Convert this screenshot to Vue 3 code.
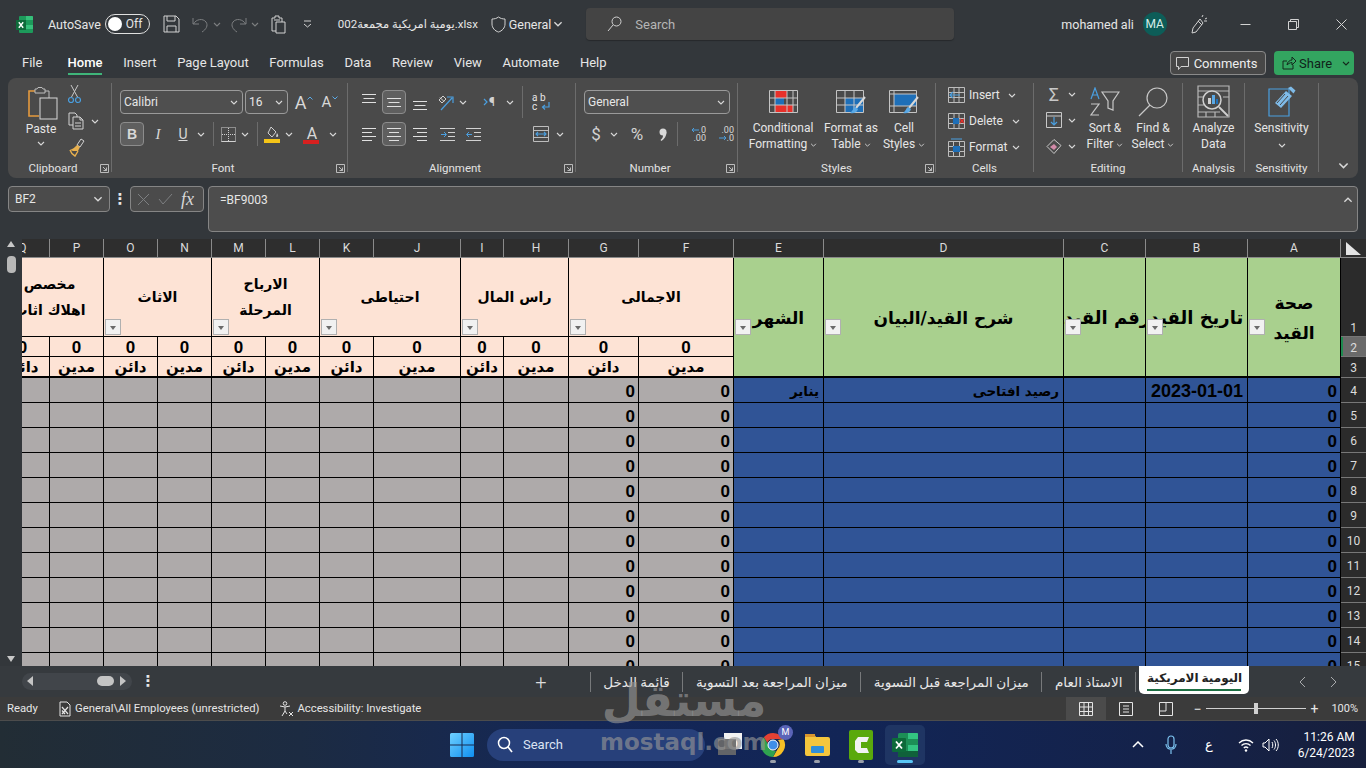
<template>
<div class="app">
  <!-- icon sprite -->
  <svg class="sprite" aria-hidden="true">
    <symbol id="chev" viewBox="0 0 8 5"><path d="M1 1l3 3 3-3" fill="none" stroke-width="1.100"/></symbol>
    <symbol id="launch" viewBox="0 0 9 9"><path d="M.5.500h8v8h-8zM3 3l3.500 3.500M6.500 3.500v3h-3" fill="none" stroke-width=".9"/></symbol>
    <symbol id="three" viewBox="0 0 14 9"><path d="M0 .500h14M1.500 4.500h11M0 8.500h14" fill="none"/></symbol>
    <symbol id="a-left" viewBox="0 0 14 13"><path d="M0 .500h14M0 4.500h10M0 8.500h14M0 12.500h10" fill="none"/></symbol>
    <symbol id="a-center" viewBox="0 0 14 13"><path d="M0 .500h14M2 4.500h10M0 8.500h14M2 12.500h10" fill="none"/></symbol>
    <symbol id="a-right" viewBox="0 0 14 13"><path d="M0 .500h14M4 4.500h10M0 8.500h14M4 12.500h10" fill="none"/></symbol>
  </svg>

  <!-- title bar -->
  <header class="titlebar">
    <svg class="xl-mini" width="17" height="17" viewBox="0 0 17 17">
      <rect x="3" y="0" width="14" height="17" rx="1" fill="#1d9a5b"/>
      <path d="M10 0h6a1 1 0 0 1 1 1v3h-7zM10 9h7v4h-7z" fill="#36c07a"/>
      <rect x="0" y="4" width="10" height="10" fill="#0e6a3a"/>
      <path d="M2.800 6.200l4.400 5.600M7.200 6.200l-4.400 5.600" stroke="#fff" stroke-width="1.400"/>
    </svg>
    <span class="autosave">AutoSave</span>
    <span class="toggle"><i></i>Off</span>
    <svg class="ic save" width="17" height="18" viewBox="0 0 17 18"><path d="M1 1h12l3 3v13H1zM4 1v5h8V1M4 17v-6h9v6"/></svg>
    <svg class="ic dim undo" width="17" height="17" viewBox="0 0 17 17"><path d="M1 2v6h6M1.500 8C4 3 11 2 14 6c2.500 3.500 0 7.500-4 10"/></svg>
    <svg class="chv dim q1"><use href="#chev"/></svg>
    <svg class="ic dim redo" width="17" height="17" viewBox="0 0 17 17"><path d="M16 2v6h-6M15.500 8C13 3 6 2 3 6c-2.500 3.500 0 7.500 4 10"/></svg>
    <svg class="chv dim q2"><use href="#chev"/></svg>
    <svg class="ic clipb" width="15" height="19" viewBox="0 0 15 19"><path d="M1 3h3V1h4v2h3v4M1 3v13h4M5 7h9v11H5zM3 5h6"/></svg>
    <svg class="ic qat" width="9" height="8" viewBox="0 0 9 8"><path d="M1 1h7M1 4l3.500 3L8 4"/></svg>
    <span class="filename">يومية امريكية مجمعة002.xlsx</span>
    <svg class="ic shield" width="15" height="17" viewBox="0 0 15 17"><path d="M7.500 1c2 1.500 4 2 6.500 2v5c0 4-3 7-6.500 8C4 15 1 12 1 8V3c2.500 0 4.500-.5 6.500-2z"/></svg>
    <span class="general">General</span>
    <svg class="chv-lg"><use href="#chev"/></svg>
    <div class="searchbox">
      <svg class="ic" width="15" height="16" viewBox="0 0 15 16"><circle cx="9.500" cy="5.500" r="4.500"/><path d="M6 9l-5 6"/></svg>
      <span>Search</span>
    </div>
    <span class="username">mohamed ali</span>
    <span class="avatar">MA</span>
    <svg class="ic pen" width="17" height="20" viewBox="0 0 17 20"><path d="M9 5L2 14l-1 5 4-1 7-9zM7 7l4 4M11 3l1-2M14 5l2-1M13 7h3"/></svg>
    <div class="winbtns">
      <svg class="ic" width="11" height="11" viewBox="0 0 11 11"><path d="M.5 5.500h10"/></svg>
      <svg class="ic" width="11" height="11" viewBox="0 0 11 11"><path d="M.5 2.500h8v8h-8zM2.500 2.500v-2h8v8h-2"/></svg>
      <svg class="ic" width="11" height="11" viewBox="0 0 11 11"><path d="M.5.500l10 10M10.500.500l-10 10"/></svg>
    </div>
  </header>

  <!-- menu tabs -->
  <nav class="menubar">
    <a v-for="t in tabs" :key="t" :class="{ on: t === 'Home', first: t === 'File' }">{{ t }}</a>
    <button class="comments">
      <svg class="ic" width="13" height="13" viewBox="0 0 13 13"><path d="M.5.500h12v9H5l-2.500 3v-3h-2z"/></svg>
      Comments
    </button>
    <div class="share">
      <svg class="ic dark" width="14" height="14" viewBox="0 0 14 14"><path d="M1 5h4M1 5v8h10V9M5 9c0-3 3-5 5-5V1l4 4-4 4V6.500C8 6.500 6 8 5 9z"/></svg>
      <span>Share</span>
      <svg class="chv dark sh"><use href="#chev"/></svg>
    </div>
  </nav>

  <!-- ribbon -->
  <section class="ribbon">
    <div class="group g-clip">
      <div class="body">
        <div class="paste">
          <svg width="32" height="33" viewBox="0 0 32 33" fill="none">
            <path d="M8 4H2v25h10" stroke="#e59a3e" stroke-width="1.600"/>
            <path d="M8 4V2h2l1-1.500h4L16 2h2v4H8zM18 4h4v7" stroke="#bdbdbd"/>
            <rect x="13" y="11" width="17" height="21" stroke="#d8d8d8" fill="#4a4a4a"/>
          </svg>
          <span class="lbl">Paste</span>
          <svg class="chv"><use href="#chev"/></svg>
        </div>
        <div class="clip-tools">
          <svg width="13" height="20" viewBox="0 0 13 20" fill="none"><path d="M3 1l6.500 12M10 1L3.500 13" stroke="#c8c8c8"/><circle cx="3" cy="16" r="2.500" stroke="#4a9fe0" stroke-width="1.200"/><circle cx="10" cy="16" r="2.500" stroke="#4a9fe0" stroke-width="1.200"/></svg>
          <div class="row">
            <svg class="ic" width="16" height="18" viewBox="0 0 16 18"><path d="M1 1h6l2 2v2M1 1v12h4M5 5h7l3 3v9H5zM12 5v3h3M7 11h6M7 14h6"/></svg>
            <svg class="chv ml5"><use href="#chev"/></svg>
          </div>
          <svg width="17" height="20" viewBox="0 0 17 20" fill="none"><path d="M13 1l3 2-4 6-3-2z" stroke="#d0d0d0"/><path d="M9 7l3 2-2 4H5l-3-1c3-1 5-3 7-5z" fill="#e8b04e"/><path d="M2 12c1 3 3 5 5 6l3-5" stroke="#e8b04e" stroke-width="1.400"/></svg>
        </div>
      </div>
      <div class="glabel pad">Clipboard<svg class="launch"><use href="#launch"/></svg></div>
    </div>

    <div class="group g-font">
      <div class="body two">
        <div class="row">
          <div class="select fam">Calibri<svg class="chv end"><use href="#chev"/></svg></div>
          <div class="select size">16<svg class="chv end"><use href="#chev"/></svg></div>
          <span class="tb w26 ml6 bigA">A<svg class="caret" width="6" height="4" viewBox="0 0 6 4"><path d="M.5 3.500L3 1l2.500 2.500" fill="none" stroke="#5aa9e6"/></svg></span>
          <span class="tb w26 midA">A<svg class="caret" width="6" height="4" viewBox="0 0 6 4"><path d="M.5.500L3 3 5.500.500" fill="none" stroke="#5aa9e6"/></svg></span>
        </div>
        <div class="row">
          <span class="tb w24 pressed b">B</span>
          <span class="tb w28 i">I</span>
          <span class="tb w22 u">U</span>
          <span class="tb w14"><svg class="chv"><use href="#chev"/></svg></span>
          <i class="vsep"></i>
          <span class="tb w20"><svg class="ic" width="15" height="15" viewBox="0 0 15 15"><path d="M.5.500h14v14H.5z" stroke-dasharray="1 1"/><path d="M7.500 1v13M1 7.500h13" stroke-dasharray="1 1"/><path d="M.5 14.500h14"/></svg></span>
          <span class="tb w14"><svg class="chv"><use href="#chev"/></svg></span>
          <i class="vsep"></i>
          <span class="tb w20"><svg width="16" height="17" viewBox="0 0 16 17" fill="none"><path d="M7 1l5 5-4 5-4-4z" stroke="#d0d0d0"/><path d="M13 7c1 1.500 1.500 2.500 1 3.500-.5.500-1.500.500-2 0" fill="#d0d0d0"/><rect x="0" y="13" width="16" height="4" fill="#f5c518"/></svg></span>
          <span class="tb w14"><svg class="chv"><use href="#chev"/></svg></span>
          <span class="tb w32 fontcolor">A</span>
          <span class="tb w10"><svg class="chv"><use href="#chev"/></svg></span>
        </div>
      </div>
      <div class="glabel pad">Font<svg class="launch"><use href="#launch"/></svg></div>
    </div>

    <div class="group g-align">
      <div class="body two">
        <div class="row">
          <span class="tb w26"><svg class="ln3 up3"><use href="#three"/></svg></span>
          <span class="tb w24 pressed"><svg class="ln3"><use href="#three"/></svg></span>
          <span class="tb w28"><svg class="ln3 dn3"><use href="#three"/></svg></span>
          <span class="tb w22"><svg width="18" height="17" viewBox="0 0 18 17" fill="none"><path d="M3 6l4-4 3 3-4 4zM4 3.500l4 4" stroke="#d0d0d0"/><path d="M5 16L16 4M11 3h6v6" stroke="#4a9fe0" stroke-width="1.200"/></svg></span>
          <span class="tb w14"><svg class="chv"><use href="#chev"/></svg></span>
          <span class="tb w28 pil ml5b"><svg width="5" height="8" viewBox="0 0 5 8" fill="none"><path d="M1 1l3 3-3 3" stroke="#4a9fe0" stroke-width="1.200"/></svg>¶</span>
          <span class="tb w14"><svg class="chv"><use href="#chev"/></svg></span>
          <i class="vsep tall"></i>
          <span class="tb w20 wrap"><span>a b<br>c</span><svg class="wrap-arrow" width="9" height="9" viewBox="0 0 9 9" fill="none"><path d="M8 0v5H2M4 3L1.500 5 4 7.500" stroke="#4a9fe0" stroke-width="1.200"/></svg></span>
        </div>
        <div class="row">
          <span class="tb w26"><svg class="ln4"><use href="#a-left"/></svg></span>
          <span class="tb w24 pressed"><svg class="ln4"><use href="#a-center"/></svg></span>
          <span class="tb w28"><svg class="ln4"><use href="#a-right"/></svg></span>
          <span class="tb w26"><svg class="ic" width="15" height="13" viewBox="0 0 15 13"><path d="M0 .500h15M8 4.500h7M8 8.500h7M0 12.500h15"/><path d="M1 6.500h5M4 4L6.500 6.500 4 9" stroke="#4a9fe0"/></svg></span>
          <span class="tb w26"><svg class="ic" width="15" height="13" viewBox="0 0 15 13"><path d="M0 .500h15M8 4.500h7M8 8.500h7M0 12.500h15"/><path d="M6 6.500H1M3 4L.5 6.500 3 9" stroke="#4a9fe0"/></svg></span>
          <span class="merge"><svg width="16" height="16" viewBox="0 0 16 16" fill="none"><path d="M.5.500h15v15H.5zM.5 4.500h15M.5 11.500h15" stroke="#bdbdbd"/><path d="M3 8h10M5 6L3 8l2 2M11 6l2 2-2 2" stroke="#4a9fe0" stroke-width="1.100"/></svg></span>
          <span class="tb w18"><svg class="chv"><use href="#chev"/></svg></span>
        </div>
      </div>
      <div class="glabel pad">Alignment<svg class="launch"><use href="#launch"/></svg></div>
    </div>

    <div class="group g-num">
      <div class="body two">
        <div class="row"><div class="select numfmt">General<svg class="chv end"><use href="#chev"/></svg></div></div>
        <div class="row">
          <span class="tb w24 sym">$</span>
          <span class="tb w12"><svg class="chv"><use href="#chev"/></svg></span>
          <span class="tb w34 sym">%</span>
          <span class="tb w18"><svg width="8" height="13" viewBox="0 0 8 13"><circle cx="4" cy="4" r="3.500" fill="#d8d8d8"/><path d="M7.500 4c0 4-2 7-5 9l-1-1c2-1.500 2.500-3 2.500-5z" fill="#d8d8d8"/></svg></span>
          <i class="vsep"></i>
          <span class="tb w28 dec"><span class="decl"><svg width="8" height="6" viewBox="0 0 8 6" fill="none"><path d="M8 3H1M3 1L1 3l2 2" stroke="#4a9fe0"/></svg>.0</span><span class="decl">.00</span></span>
          <span class="tb w28 dec"><span class="decl">.00</span><span class="decl"><svg width="8" height="6" viewBox="0 0 8 6" fill="none"><path d="M0 3h7M5 1l2 2-2 2" stroke="#4a9fe0"/></svg>.0</span></span>
        </div>
      </div>
      <div class="glabel pad">Number<svg class="launch"><use href="#launch"/></svg></div>
    </div>

    <div class="group g-styles">
      <div class="body">
        <div class="big w76">
          <div class="big-ico">
            <svg width="29" height="23" viewBox="0 0 29 23" fill="none">
              <rect x="6" y="1" width="12" height="7" fill="#e8302a"/><rect x="6" y="8" width="9" height="7" fill="#1e6fb8"/><rect x="6" y="15" width="18" height="7" fill="#e8302a"/>
              <path d="M.5.500h28v22H.5zM6 .500v22M18 .500v22M24 .500v22M.5 8h28M.5 15h28" stroke="#c4c4c4"/>
            </svg>
          </div>
          <div class="big-txt">Conditional<br>Formatting<svg class="chv tiny"><use href="#chev"/></svg></div>
        </div>
        <div class="big w52">
          <div class="big-ico">
            <svg width="30" height="24" viewBox="0 0 30 24" fill="none">
              <rect x="9" y="8" width="18" height="14" fill="#1e6fb8"/>
              <path d="M.5.500h27v22H.5zM9 .500v22M18 .500v22M.5 8h27M.5 15h27" stroke="#c4c4c4"/>
              <path d="M29 7l-9 11" stroke="#d8d8d8" stroke-width="2"/><path d="M19 17c-2 1-2 4-5 6 3 1 7 0 8-4z" fill="#5aa9e6"/>
            </svg>
          </div>
          <div class="big-txt">Format as<br>Table<svg class="chv tiny"><use href="#chev"/></svg></div>
        </div>
        <div class="big w46">
          <div class="big-ico">
            <svg width="30" height="24" viewBox="0 0 30 24" fill="none">
              <rect x="5" y="4" width="22" height="12" fill="#1e6fb8"/>
              <path d="M.5.500h27v22H.5zM5 .500v22M.5 4h27M.5 16h27" stroke="#c4c4c4"/>
              <path d="M29 7l-9 11" stroke="#d8d8d8" stroke-width="2"/><path d="M19 17c-2 1-2 4-5 6 3 1 7 0 8-4z" fill="#5aa9e6"/>
            </svg>
          </div>
          <div class="big-txt">Cell<br>Styles<svg class="chv tiny"><use href="#chev"/></svg></div>
        </div>
      </div>
      <div class="glabel">Styles<svg class="launch launch-styles"><use href="#launch"/></svg></div>
    </div>

    <div class="group g-cells">
      <div class="body col">
        <div class="cellrow">
          <svg width="17" height="16" viewBox="0 0 17 16" fill="none"><path d="M.5.500h16v15H.5zM.5 5.500h16M.5 10.500h16M6 .500v15M11 .500v15" stroke="#bdbdbd"/><path d="M12 8H2M5 5L2 8l3 3" stroke="#4a9fe0" stroke-width="1.200"/></svg>
          <span>Insert</span><svg class="chv ml-a"><use href="#chev"/></svg>
        </div>
        <div class="cellrow">
          <svg width="17" height="16" viewBox="0 0 17 16" fill="none"><path d="M.5.500h16v15H.5zM.5 5.500h16M.5 10.500h16M6 .500v15M11 .500v15" stroke="#bdbdbd"/><rect x="5" y="5" width="6" height="6" fill="#1e6fb8"/><path d="M12 6l4 4M16 6l-4 4" stroke="#e8302a" stroke-width="1.200"/></svg>
          <span>Delete</span><svg class="chv ml-a r4"><use href="#chev"/></svg>
        </div>
        <div class="cellrow">
          <svg width="17" height="19" viewBox="0 0 17 19" fill="none"><path d="M.5 3.500h16v15H.5zM.5 8.500h16M.5 13.500h16M5.500 3.500v15M11.500 3.500v15" stroke="#bdbdbd"/><rect x="5" y="8" width="7" height="6" fill="#1e6fb8"/><path d="M3 1h11" stroke="#4a9fe0"/></svg>
          <span>Format</span><svg class="chv tight"><use href="#chev"/></svg>
        </div>
      </div>
      <div class="glabel">Cells</div>
    </div>

    <div class="group g-edit">
      <div class="body">
        <div class="edit-tools">
          <div class="row"><span class="sigma">Σ</span><svg class="chv"><use href="#chev"/></svg></div>
          <div class="row">
            <svg width="16" height="16" viewBox="0 0 16 16" fill="none"><path d="M.5.500h15v15H.5zM.5 4h15" stroke="#c8c8c8"/><path d="M8 5v8M5 10l3 3 3-3" stroke="#4a9fe0" stroke-width="1.200"/></svg>
            <svg class="chv"><use href="#chev"/></svg>
          </div>
          <div class="row">
            <svg width="16" height="15" viewBox="0 0 16 15" fill="none"><path d="M8 .500l7 6-7 8-7-7z" stroke="#c8c8c8"/><path d="M4 8l4-3 3 3-3 3z" fill="#d28aa8"/></svg>
            <svg class="chv"><use href="#chev"/></svg>
          </div>
        </div>
        <div class="big w52">
          <div class="big-ico">
            <svg width="30" height="30" viewBox="0 0 30 30" fill="none">
              <path d="M1 12L5 1l4 11M2.500 8h5" stroke="#4a9fe0" stroke-width="1.200"/>
              <path d="M1 17h8L1 28h8" stroke="#c8c8c8" stroke-width="1.200"/>
              <path d="M12 5h17l-6 9v9l-5-2v-7z" stroke="#c8c8c8" stroke-width="1.200"/>
            </svg>
          </div>
          <div class="big-txt">Sort &amp;<br>Filter<svg class="chv tiny"><use href="#chev"/></svg></div>
        </div>
        <div class="big w44">
          <div class="big-ico">
            <svg width="30" height="30" viewBox="0 0 30 30" fill="none"><circle cx="19" cy="11" r="10" stroke="#c8c8c8" stroke-width="1.200"/><path d="M12 18L1 29" stroke="#c8c8c8" stroke-width="1.200"/></svg>
          </div>
          <div class="big-txt">Find &amp;<br>Select<svg class="chv tiny"><use href="#chev"/></svg></div>
        </div>
      </div>
      <div class="glabel">Editing</div>
    </div>

    <div class="group g-ana">
      <div class="body">
        <div class="big fill">
          <div class="big-ico">
            <svg width="33" height="33" viewBox="0 0 33 33" fill="none">
              <path d="M1 1h31v31H1zM1 6h31M1 12h6M26 12h6M1 20h6M1 27h22M9 27v5M18 27v5" stroke="#b8b8b8" stroke-width="1.200"/>
              <circle cx="15" cy="15" r="9" stroke="#d0d0d0" stroke-width="1.500" fill="#4a4a4a"/>
              <rect x="11" y="13" width="3" height="6" fill="#d0d0d0"/><rect x="15" y="10" width="3" height="9" fill="#5aa9e6"/><rect x="19" y="14" width="2" height="5" fill="#1e6fb8"/>
              <path d="M22 22l9 9" stroke="#d0d0d0" stroke-width="1.800"/>
            </svg>
          </div>
          <div class="big-txt">Analyze<br>Data</div>
        </div>
      </div>
      <div class="glabel">Analysis</div>
    </div>

    <div class="group g-sens">
      <div class="body">
        <div class="big fill">
          <div class="big-ico">
            <svg width="28" height="31" viewBox="0 0 28 31" fill="none">
              <path d="M1 3h20v27H1z" stroke="#4a9fe0" stroke-width="1.200"/>
              <path d="M7 17L18 5l6 5-11 12z" fill="#7fbbe8"/>
              <path d="M9 17l8-9M12 19l8-9" stroke="#4a4a4a"/>
              <path d="M20 2l3-1.500 4.500 4-2 3z" fill="#7fbbe8"/>
            </svg>
          </div>
          <div class="big-txt">Sensitivity<br><svg class="chv"><use href="#chev"/></svg></div>
        </div>
      </div>
      <div class="glabel">Sensitivity</div>
    </div>

    <svg class="collapse"><use href="#chev"/></svg>
  </section>

  <!-- formula bar -->
  <div class="formula">
    <div class="namebox">BF2<svg class="chv-lg end"><use href="#chev"/></svg></div>
    <span class="dots">⋮</span>
    <div class="fxbox">
      <svg class="ic dim" width="13" height="13" viewBox="0 0 13 13"><path d="M1 1l11 11M12 1L1 12"/></svg>
      <svg class="ic dim" width="15" height="12" viewBox="0 0 15 12"><path d="M1 6l4 5 9-10"/></svg>
      <span class="fx">fx</span>
    </div>
    <div class="finput">
      <span>=BF9003</span>
      <svg class="chv-lg up"><use href="#chev"/></svg>
    </div>
  </div>

  <!-- sheet -->
  <div class="gridarea">
    <div class="vscroll">
      <span class="arr"></span>
      <span class="thumb"></span>
      <span class="arr down"></span>
    </div>
    <div class="gridwrap">
      <table class="sheet">
        <colgroup>
          <col v-for="c in cols" :key="c.n" :style="{ width: c.w + 'px' }">
          <col class="rowhead-col">
        </colgroup>
        <tbody>
          <tr class="r-head">
            <td v-for="c in cols" :key="c.n" class="colhead">{{ c.n }}</td>
            <td class="colhead corner"><svg width="15" height="13" viewBox="0 0 15 13"><path d="M0 0v13h15z" fill="#e4e4e4"/></svg></td>
          </tr>
          <tr class="r1">
            <td v-for="g in groups" :key="g.lines[0]" colspan="2" class="pink title">
              <div v-for="l in g.lines" :key="l">{{ l }}</div>
              <span class="filter"></span>
            </td>
            <td v-for="h in greens" :key="h.lines[0]" rowspan="3" class="green title big-title" :class="h.cls">
              <div v-for="l in h.lines" :key="l">{{ l }}</div>
              <span class="filter"></span>
            </td>
            <td class="rownum low">1</td>
          </tr>
          <tr class="r2">
            <td v-for="(l, i) in subLabels" :key="i" class="pink zero">0</td>
            <td class="rownum sel">2</td>
          </tr>
          <tr class="r3">
            <td v-for="(l, i) in subLabels" :key="i" class="pink sub">{{ l }}</td>
            <td class="rownum">3</td>
          </tr>
          <tr v-for="r in dataRows" :key="r" class="r-data">
            <td v-for="c in cols" :key="c.n" :class="[c.blue ? 'blue' : 'gray', { amt: c.zero }]">
              <template v-if="c.zero">0</template>
              <span v-else-if="r === 4 && c.n === 'B'" class="date">2023-01-01</span>
              <span v-else-if="r === 4 && firstRow[c.n]" class="ar">{{ firstRow[c.n] }}</span>
            </td>
            <td class="rownum">{{ r }}</td>
          </tr>
        </tbody>
      </table>
    </div>
  </div>

  <!-- sheet tabs -->
  <div class="sheetbar">
    <div class="hscroll">
      <svg width="7" height="10" viewBox="0 0 7 10"><path d="M6 0v10L0 5z" fill="#c4c4c4"/></svg>
      <span class="hthumb"></span>
      <svg width="7" height="10" viewBox="0 0 7 10"><path d="M1 0v10l6-5z" fill="#c4c4c4"/></svg>
    </div>
    <span class="dots small">⋮</span>
    <div class="sheets">
      <span class="plus">+</span>
      <template v-for="s in sheets" :key="s">
        <i class="tabsep"></i>
        <span class="sheet-tab">{{ s }}</span>
      </template>
      <i class="tabsep"></i>
      <span class="sheet-tab active">اليومية الامريكية</span>
    </div>
    <div class="sheet-nav">
      <svg class="ic nav" width="8" height="12" viewBox="0 0 8 12"><path d="M7 1L2 6l5 5"/></svg>
      <svg class="ic nav" width="8" height="12" viewBox="0 0 8 12"><path d="M1 1l5 5-5 5"/></svg>
    </div>
  </div>

  <!-- status bar -->
  <footer class="status">
    <span class="ready">Ready</span>
    <svg class="ic light st1" width="12" height="16" viewBox="0 0 12 16"><path d="M1 1h7l3 3v11H1z"/><path d="M3 6l6 7M9 6l-6 7M3 9.500l3 3.500" stroke-width="1.200"/></svg>
    <span>General\All Employees (unrestricted)</span>
    <svg class="ic light st2" width="15" height="16" viewBox="0 0 15 16"><circle cx="6" cy="2.500" r="1.800"/><path d="M1 5l5 1 5-1M6 6v4M6 10l-3 5M6 10l2 3M10 11l4 4M14 11l-4 4"/></svg>
    <span>Accessibility: Investigate</span>
    <div class="status-right">
      <span class="view on"><svg class="ic light" width="14" height="14" viewBox="0 0 14 14"><path d="M.5.500h13v13H.5zM5 .500v13M9.500.500v13M.5 5h13M.5 9.500h13"/></svg></span>
      <span class="view"><svg class="ic light" width="14" height="14" viewBox="0 0 14 14"><path d="M.5.500h13v13H.5zM4 4h6M4 7h6M4 10h6"/></svg></span>
      <span class="view"><svg class="ic light" width="14" height="14" viewBox="0 0 14 14"><path d="M.5.500h13v13H.5zM7 .500V9H.5"/></svg></span>
      <span class="zoomsign">−</span>
      <span class="slider"><i></i></span>
      <span class="zoomsign">+</span>
      <span class="pct">100%</span>
    </div>
  </footer>

  <!-- taskbar -->
  <div class="taskbar">
    <svg class="winlogo" width="24" height="24" viewBox="0 0 24 24">
      <defs><linearGradient id="wg" x1="0" y1="0" x2="1" y2="1"><stop offset="0" stop-color="#6fd0ff"/><stop offset="1" stop-color="#0f8ff0"/></linearGradient></defs>
      <path d="M0 1.500Q0 0 1.500 0H11.500V11.500H0zM12.500 0H22.500Q24 0 24 1.500V11.500H12.500zM0 12.500H11.500V24H1.500Q0 24 0 22.500zM12.500 12.500H24V22.500Q24 24 22.500 24H12.500z" fill="url(#wg)"/>
    </svg>
    <div class="tsearch">
      <svg width="16" height="17" viewBox="0 0 16 17" fill="none"><circle cx="7" cy="7" r="5.500" stroke="#fff" stroke-width="1.500"/><path d="M11 11l4 5" stroke="#fff" stroke-width="1.700"/></svg>
      <span>Search</span>
    </div>
    <div class="apps">
      <div class="app-ic blank"><i></i><b></b></div>
      <div class="app-ic running">
        <svg width="26" height="26" viewBox="0 0 26 26">
          <path d="M13 1a12 12 0 0 1 10.400 6H13a6 6 0 0 0-5.700 4L3.800 5.300A12 12 0 0 1 13 1z" fill="#e34133"/>
          <path d="M23.400 7A12 12 0 0 1 13 25l5-8.500A6 6 0 0 0 18 8z" fill="#f6c026"/>
          <path d="M3.800 5.300L9 14a6 6 0 0 0 7 4.700L13 25A12 12 0 0 1 3.800 5.300z" fill="#2fa34f"/>
          <circle cx="13" cy="13" r="5" fill="#3f8ee8" stroke="#fff" stroke-width="1"/>
        </svg>
        <span class="badge">M</span>
      </div>
      <div class="app-ic running">
        <svg width="25" height="22" viewBox="0 0 25 22">
          <path d="M0 2a2 2 0 0 1 2-2h7l2 3h12a2 2 0 0 1 2 2v15a2 2 0 0 1-2 2H2a2 2 0 0 1-2-2z" fill="#f4c63d"/>
          <rect x="0" y="0" width="10" height="3" fill="#d9962e"/>
          <rect x="6" y="12" width="13" height="7" rx="1" fill="#2f8fd9"/>
        </svg>
      </div>
      <div class="app-ic running">
        <svg width="24" height="30" viewBox="0 0 24 30">
          <rect width="24" height="30" rx="2" fill="#5aa90c"/>
          <path d="M20 7H9L6 11v9l3 3h11l-2-5h-6v-6h6z" fill="#f2f2f2"/>
        </svg>
      </div>
      <div class="app-ic current running">
        <svg width="26" height="24" viewBox="0 0 26 24">
          <rect x="6" y="0" width="20" height="24" rx="1.500" fill="#1c8f56"/>
          <path d="M16 0h9a1 1 0 0 1 1 1v5H16zM16 12h10v6H16z" fill="#33c481"/>
          <path d="M6 18h20v5a1 1 0 0 1-1 1H7a1 1 0 0 1-1-1z" fill="#10613a"/>
          <rect x="0" y="5" width="14" height="14" rx="1" fill="#0d6a3a"/>
          <path d="M4 8.500l6 7M10 8.500l-6 7" stroke="#fff" stroke-width="1.800"/>
        </svg>
      </div>
    </div>
    <div class="tray">
      <svg class="ic white" width="12" height="7" viewBox="0 0 12 7"><path d="M1 6l5-5 5 5" stroke-width="1.500"/></svg>
      <svg class="mic" width="12" height="20" viewBox="0 0 12 20" fill="none"><rect x="3" y="1" width="6" height="12" rx="3" stroke="#7cc2ef" stroke-width="1.200"/><path d="M1 9c0 7 10 7 10 0M6 15v4" stroke="#7cc2ef" stroke-width="1.200"/></svg>
      <span class="lang">ع</span>
      <svg class="wifi" width="16" height="14" viewBox="0 0 16 14" fill="none"><path d="M1 5c4-4 10-4 14 0M3.500 7.500c2.500-2.500 6.500-2.500 9 0M5.800 10c1.300-1.200 3-1.200 4.400 0" stroke="#fff" stroke-width="1.300"/><circle cx="8" cy="12.500" r="1.200" fill="#fff"/></svg>
      <svg class="vol" width="17" height="16" viewBox="0 0 17 16" fill="none"><path d="M1 6v4h2l4 4V2L3 6zM10 5c1 1.500 1 4.500 0 6M12 3.500c2 2.500 2 6.500 0 9M14 2c3 3 3 9 0 12" stroke="#fff"/></svg>
      <div class="clock"><span>11:26 AM</span><span>6/24/2023</span></div>
    </div>
  </div>

  <!-- site watermark over the screenshot -->
  <div class="watermark"><b>مستقل</b><span>mostaql.com</span></div>
</div>
</template>

<script setup>
const tabs = ['File', 'Home', 'Insert', 'Page Layout', 'Formulas', 'Data', 'Review', 'View', 'Automate', 'Help']

// columns run right to left in the workbook, so Q comes first here
const cols = [
  { n: 'Q', w: 54 }, { n: 'P', w: 54 }, { n: 'O', w: 54 }, { n: 'N', w: 54 },
  { n: 'M', w: 54 }, { n: 'L', w: 54 }, { n: 'K', w: 54 }, { n: 'J', w: 87 },
  { n: 'I', w: 43 }, { n: 'H', w: 65 }, { n: 'G', w: 70, zero: true }, { n: 'F', w: 95, zero: true },
  { n: 'E', w: 90, blue: true }, { n: 'D', w: 240, blue: true }, { n: 'C', w: 82, blue: true },
  { n: 'B', w: 102, blue: true }, { n: 'A', w: 93, blue: true, zero: true }
]

const groups = [
  { lines: ['مخصص', 'اهلاك اثاث'] },
  { lines: ['الاثاث'] },
  { lines: ['الارباح', 'المرحلة'] },
  { lines: ['احتياطى'] },
  { lines: ['راس المال'] },
  { lines: ['الاجمالى'] }
]

const greens = [
  { lines: ['الشهر'] },
  { lines: ['شرح القيد/البيان'] },
  { lines: ['رقم القيد'], cls: 'clipped' },
  { lines: ['تاريخ القيد'], cls: 'clipped' },
  { lines: ['صحة', 'القيد'] }
]

const subLabels = ['دائن', 'مدين', 'دائن', 'مدين', 'دائن', 'مدين', 'دائن', 'مدين', 'دائن', 'مدين', 'دائن', 'مدين']

const dataRows = [4, 5, 6, 7, 8, 9, 10, 11, 12, 13, 14, 15]
const firstRow = { D: 'رصيد افتاحى', E: 'يناير' }

const sheets = ['قائمة الدخل', 'ميزان المراجعة بعد التسوية', 'ميزان المراجعة قبل التسوية', 'الاستاذ العام']
</script>

<style>
html, body { margin: 0; padding: 0; background: #33373b; overflow: hidden; }
</style>

<style scoped>
.app {
  position: relative;
  width: 1366px;
  height: 768px;
  display: flex;
  flex-direction: column;
  overflow: hidden;
  background: #33373b;
  color: #e6e6e6;
  font: 12.5px Roboto, "DejaVu Sans", sans-serif;
}
.sprite { position: absolute; width: 0; height: 0; }
svg { flex: none; display: block; }
.ic { fill: none; stroke: #d2d2d2; stroke-width: 1; }
.ic.dim { stroke: #7d7f81; }
.ic.nav { stroke: #a8aaac; }
.ic.dark { stroke: #15281d; }
.ic.light { stroke: #e4e4e4; }
.ic.white { stroke: #fff; }
.chv { width: 8px; height: 5px; stroke: #d8d8d8; }
.chv.dim { stroke: #7d7f81; }
.chv.dark { stroke: #15281d; }
.chv-lg { width: 10px; height: 6px; stroke: #d8d8d8; }
.end { margin-left: auto; }

/* title bar */
.titlebar { height: 48px; flex: none; display: flex; align-items: center; padding-left: 16px; }
.autosave { margin-left: 15px; font-size: 12.5px; }
.toggle {
  margin-left: 4px;
  width: 45px; height: 20px; box-sizing: border-box;
  border: 1px solid #e0e0e0; border-radius: 10px;
  display: flex; align-items: center; gap: 4px; padding-left: 2px;
  font-size: 12px;
}
.toggle i { width: 14px; height: 14px; border-radius: 50%; background: #fff; }
.save { margin-left: 13px; }
.undo { margin-left: 12px; }
.q1 { margin-left: 4px; }
.redo { margin-left: 9px; }
.q2 { margin-left: 4px; }
.clipb { margin-left: 12px; }
.qat { margin-left: 17px; }
.filename { margin-left: 26px; width: 145px; white-space: nowrap; font-size: 11.5px; }
.shield { margin-left: 8px; }
.general { margin-left: 3px; font-size: 12.5px; }
.general + .chv-lg { margin-left: 2px; }
.searchbox {
  margin-left: 23px;
  width: 368px; height: 32px; box-sizing: border-box;
  background: #444; border-radius: 4px;
  display: flex; align-items: center; gap: 13px; padding-left: 21px;
  color: #b5b5b5; font-size: 13px;
  box-shadow: 0 1px 1px #26292c;
}
.username { margin-left: 107px; font-size: 12.5px; }
.avatar {
  margin-left: 9px; width: 24px; height: 24px; border-radius: 50%;
  background: #0d5d58; color: #d6eee9; font-size: 12px;
  display: flex; align-items: center; justify-content: center;
}
.pen { margin-left: 24px; }
.winbtns { margin-left: 32px; display: flex; gap: 37px; }

/* menu */
.menubar { height: 30px; flex: none; display: flex; align-items: center; padding: 0 12px 0 22px; gap: 20.700px; }
.menubar a { font-size: 13px; line-height: 30px; height: 30px; box-sizing: border-box; position: relative; }
.menubar a.first { margin-right: 4.500px; }
.menubar a.on { font-weight: 500; color: #fff; }
.menubar a.on::after {
  content: ""; position: absolute; left: 0; right: 0; bottom: 3px; height: 2px; background: #3fb57a;
}
.comments {
  margin-left: auto;
  width: 96px; height: 24px; box-sizing: border-box;
  background: #474747; border: 1px solid #8a8a8a; border-radius: 4px;
  color: #eee; font: 13px Roboto, sans-serif;
  display: flex; align-items: center; justify-content: center; gap: 5px; padding: 0 3px 0 0;
}
.share {
  margin-left: -12.700px;
  width: 80px; height: 24px; box-sizing: border-box;
  background: #33a560; border-radius: 4px;
  display: flex; align-items: center; padding-left: 8px; gap: 3px;
  color: #10231a; font-size: 13px;
}
.sh { margin-left: 7px; }

/* ribbon */
.ribbon {
  height: 100px; flex: none; box-sizing: border-box;
  margin: 0 8px; padding: 5px 0;
  background: #4a4a4a; border-radius: 8px;
  display: flex; position: relative;
  font-size: 12px;
}
.group { height: 89px; box-sizing: border-box; border-right: 1px solid #6c6c6c; flex: none; display: flex; flex-direction: column; }
.body { height: 77px; flex: none; box-sizing: border-box; display: flex; }
.body.two { flex-direction: column; gap: 8px; padding-top: 7px; }
.body.col { flex-direction: column; }
.glabel { height: 16px; line-height: 16px; flex: none; text-align: center; font-size: 11.5px; position: relative; color: #e2e2e2; }
.glabel.pad { padding-right: 13px; }
.launch { position: absolute; right: 2px; top: 4px; width: 9px; height: 9px; stroke: #c8c8c8; }
.launch-styles { right: 1px; }
.row { display: flex; align-items: center; height: 24px; flex: none; }
.tb { display: flex; align-items: center; justify-content: center; height: 24px; flex: none; box-sizing: border-box; }
.w10 { width: 10px; } .w12 { width: 12px; } .w14 { width: 14px; } .w18 { width: 18px; } .w20 { width: 20px; }
.w22 { width: 22px; } .w24 { width: 24px; } .w26 { width: 26px; } .w28 { width: 28px; } .w32 { width: 32px; } .w34 { width: 34px; }
.ml5 { margin-left: 7px; } .ml6 { margin-left: 3px; } .ml5b { margin-left: 5px; }
.pressed { background: #5f5f5f; border: 1px solid #8c8c8c; border-radius: 4px; }
.vsep { width: 1px; height: 24px; background: #6c6c6c; margin: 0 4px 0 5px; flex: none; }
.vsep.tall { height: 32px; margin: 0 9px 0 5px; }
.ln3 { width: 14px; height: 9px; stroke: #e0e0e0; }
.up3 { margin-top: -8px; }
.dn3 { margin-top: 6px; }
.ln4 { width: 14px; height: 13px; stroke: #e0e0e0; }

.g-clip { width: 104px; }
.g-clip .body { padding-left: 12px; }
.paste { width: 42px; display: flex; flex-direction: column; align-items: center; padding-top: 4px; }
.paste > svg:first-child { margin-left: 3px; }
.paste .lbl { margin-top: 1px; line-height: 16px; }
.paste .chv { margin-top: 4px; }
.clip-tools { margin-left: 6px; display: flex; flex-direction: column; gap: 8px; padding-top: 1px; width: 32px; }
.clip-tools .row { height: auto; }

.g-font { width: 236px; }
.g-font .body { padding-left: 8px; }
.select {
  height: 24px; box-sizing: border-box;
  background: #4f4f4f; border: 1px solid #9a9a9a; border-radius: 4px;
  display: flex; align-items: center; padding: 0 4px 0 3px;
  font-size: 12px;
}
.fam { width: 123px; }
.size { width: 43px; margin-left: 2px; }
.bigA, .midA { font-size: 18px; align-items: center; gap: 0; color: #d8d8d8; }
.midA { font-size: 15px; }
.caret { margin: -8px 0 0 1px; }
.b { font: bold 14px "Liberation Sans", sans-serif; color: #d8d8d8; }
.i { font: italic 15px "Liberation Serif", serif; color: #d8d8d8; }
.u { font-size: 14px; text-decoration: underline; color: #d8d8d8; }
.fontcolor {
  font-size: 16px; line-height: 14px; color: #d8d8d8; position: relative;
}
.fontcolor::after { content: ""; position: absolute; left: 7px; width: 16px; top: 18px; height: 4px; background: #d7201f; }

.g-align { width: 228px; }
.g-align .body { padding-left: 8px; }
.pil { gap: 1px; color: #d2d2d2; font-size: 12px; }
.wrap { gap: 0; font: 10px/9px Roboto, sans-serif; align-items: center; flex-direction: row; position: relative; justify-content: flex-start; }
.wrap-arrow { margin: 8px 0 0 -5px; }
.merge { margin-left: 45px; width: 20px; display: flex; justify-content: center; }

.g-num { width: 162px; }
.g-num .body { padding-left: 8px; }
.numfmt { width: 146px; }
.sym { font-size: 17px; color: #d2d2d2; }
.dec { font-size: 9px; line-height: 8px; flex-direction: column; align-items: flex-end; padding-right: 4px; color: #d8d8d8; }
.decl { display: flex; align-items: center; height: 8px; }

.big { display: flex; flex-direction: column; align-items: center; flex: none; }
.big.fill { flex: 1; }
.big-ico { height: 37px; display: flex; align-items: center; justify-content: center; flex: none; }
.big-txt { line-height: 16px; text-align: center; white-space: nowrap; }
.big-txt svg { display: inline-block; }
.tiny { width: 7px; height: 4px; margin-left: 3px; vertical-align: 1px; }
.w76 { width: 76px; } .w52 { width: 52px; } .w46 { width: 46px; } .w44 { width: 44px; }
.g-styles { width: 198px; }
.g-styles .body { padding-left: 7px; gap: 4px; }

.g-cells { width: 98px; }
.g-cells .body { padding: 0 14px 0 12px; }
.cellrow { height: 26px; display: flex; align-items: center; gap: 4px; flex: none; }
.cellrow:first-child { height: 24px; }
.cellrow:nth-child(2) { margin-top: 1px; }
.ml-a { margin-left: auto; margin-right: 3px; }
.r4 { margin-right: -1px; }
.tight { margin-left: 1px; }

.g-edit { width: 149px; }
.g-edit .body { padding-left: 12px; }
.edit-tools { width: 33px; display: flex; flex-direction: column; gap: 2px; margin-top: -1px; }
.edit-tools .row { gap: 6px; height: 24px; }
.sigma { font-size: 18px; color: #c8c8c8; width: 16px; text-align: center; }

.g-ana { width: 62px; }
.g-sens { width: 74px; }
.collapse { position: absolute; right: 9px; top: 84px; width: 11px; height: 7px; stroke: #d8d8d8; }

/* formula bar */
.formula { height: 46px; flex: none; margin-top: 8px; padding: 0 8px; display: flex; align-items: flex-start; font-size: 12px; }
.namebox {
  width: 102px; height: 26px; box-sizing: border-box;
  background: #4b4b4b; border: 1px solid #858585; border-radius: 4px;
  display: flex; align-items: center; padding: 0 6px;
}
.dots { width: 20px; text-align: center; line-height: 26px; font-size: 15px; font-weight: bold; }
.fxbox {
  width: 74px; height: 26px; box-sizing: border-box;
  border: 1px solid #858585; border-radius: 4px; background: #4b4b4b;
  display: flex; align-items: center; gap: 8px; padding-left: 6px;
}
.fx { font: italic 18px "Liberation Serif", serif; color: #d8d8d8; }
.finput {
  margin-left: 4px; flex: 1; height: 46px; box-sizing: border-box;
  background: #4d4d4d; border: 1px solid #858585; border-radius: 4px;
  display: flex; justify-content: space-between; padding: 6px 4px 0 11px;
  line-height: 14px;
}
.up { transform: rotate(180deg); margin: 4px 0 0; stroke: #d8d8d8; }

/* sheet area */
.gridarea { height: 427px; flex: none; margin-top: 7px; display: flex; }
.vscroll { width: 22px; flex: none; position: relative; display: flex; flex-direction: column; align-items: center; }
.arr { width: 0; height: 0; border: 4px solid transparent; border-bottom: 6px solid #c8c8c8; border-top: 0; margin: 2px 0 0; }
.arr.down { border-bottom: 0; border-top: 6px solid #c8c8c8; margin: auto 0 4px; }
.thumb { width: 9px; height: 17px; margin-top: 9px; background: #b8b8b8; border-radius: 4px; }
.gridwrap { flex: 1; overflow: hidden; display: flex; justify-content: flex-end; }
.sheet {
  flex: none; table-layout: fixed; border-collapse: separate; border-spacing: 0;
  font-family: "DejaVu Sans", sans-serif; color: #000;
  width: 1370px;
}
.rowhead-col { width: 25px; }
td { padding: 0; box-sizing: border-box; overflow: hidden; white-space: nowrap; }
.colhead {
  height: 19px; background: #2e2e2e; color: #dcdcdc; text-align: center;
  font: 12px Roboto, sans-serif;
  border-right: 1px solid #8a8a8a; border-bottom: 1px solid #8a8a8a;
}
.corner { border-right: 0; background: #2e2e2e; padding-left: 5px; }
.r1 td { height: 79px; }
.r2 td { height: 20px; }
.r3 td { height: 21px; }
.r-data td { height: 25px; }
.pink { background: #fde3d5; border-right: 1px solid #000; border-bottom: 1px solid #000; text-align: center; }
.green { background: #a9d08e; border-right: 1px solid #000; border-bottom: 2px solid #000; text-align: center; }
.title { position: relative; font-weight: bold; font-size: 14px; line-height: 26px; }
.big-title { font-size: 17px; line-height: 30px; padding-top: 1px; }
.clipped { font-size: 18px; }
.filter {
  position: absolute; left: 1px; bottom: 1px; width: 16px; height: 16px; box-sizing: border-box;
  background: #f1f1f1; border: 1px solid #b0b0b0;
}
.big-title .filter { bottom: 41px; }
.filter::after {
  content: ""; position: absolute; left: 4px; top: 6px;
  border: 3.500px solid transparent; border-top: 4px solid #6a6a6a; border-bottom: 0;
}
.zero { font: bold 17px "Liberation Sans", sans-serif; line-height: 16px; padding-top: 3px; }
.sub { font-size: 15px; font-weight: bold; line-height: 17px; border-bottom-width: 2px; padding-top: 1px; }
.gray { background: #aeaaaa; border-right: 1px solid #000; border-bottom: 1px solid #000; }
.blue { background: #305496; border-right: 1px solid #000; border-bottom: 1px solid #000; text-align: right; padding: 2px 4px 0 0; font: bold 16px "Liberation Sans", sans-serif; line-height: 20px; }
.amt { font: bold 17px "Liberation Sans", sans-serif; line-height: 20px; text-align: right; padding: 3px 3px 0 0; }
.date { font: bold 18px/20px "Liberation Sans", sans-serif; }
.ar { font: bold 13.500px/20px "DejaVu Sans", sans-serif; }
.rownum {
  background: #2b2b2b; color: #dcdcdc; text-align: center;
  font: 12px/14px Roboto, sans-serif; padding-top: 2px;
  border-bottom: 1px solid #777; border-right: 0 !important;
}
.rownum.low { vertical-align: bottom; padding: 0 0 1px; }
.rownum.sel { background: #6a6a6a; box-shadow: inset 2px 0 0 #1d8a4f; }

/* sheet tabs */
.sheetbar { height: 31px; flex: none; display: flex; align-items: center; background: #363a3e; padding-left: 22px; position: relative; }
.hscroll {
  width: 110px; height: 17px; box-sizing: border-box; margin-top: -1px;
  background: #41454a; border-radius: 9px;
  display: flex; align-items: center; padding: 0 6px 0 5px;
}
.hthumb { margin-left: auto; margin-right: 5px; width: 17px; height: 10px; background: #c4c4c4; border-radius: 5px; }
.dots.small { width: 32px; line-height: 17px; }
.sheets { flex: 1; display: flex; align-items: center; height: 100%; justify-content: flex-end; }
.plus { font-size: 20px; font-weight: 300; margin-right: 43px; color: #ddd; }
.tabsep { width: 1px; height: 20px; background: #77797b; flex: none; }
.sheet-tab { padding: 0 12.500px; white-space: nowrap; font-size: 13.600px; line-height: 22px; }
.sheet-tab.active {
  margin-left: 3px;
  background: #fff; color: #222; font-weight: bold;
  height: 28px; align-self: flex-start; box-sizing: border-box;
  padding: 3px 8px 0; line-height: 18px; width: 110px;
  border-radius: 0 0 5px 5px;
  position: relative; font-size: 12px; text-align: center;
}
.sheet-tab.active::after { content: ""; position: absolute; left: 8px; right: 8px; bottom: 3px; height: 2px; background: #1d7044; }
.sheet-nav { width: 117px; flex: none; display: flex; padding-left: 49px; gap: 24px; box-sizing: border-box; }

/* status bar */
.status { height: 24px; flex: none; background: #3b3b3b; border-bottom: 1px solid #4c4c4c; box-sizing: border-box; display: flex; align-items: center; padding-left: 7px; font-size: 11.300px; }
.ready { width: 52px; }
.st1 { margin-right: 4px; }
.st2 { margin: 0 3px 0 20px; }
.status-right { margin-left: auto; display: flex; align-items: center; height: 100%; padding-right: 8px; }
.view { width: 40px; height: 23px; display: flex; align-items: center; justify-content: center; }
.view.on { background: #4b4b4b; }
.zoomsign { width: 10px; text-align: center; font-size: 14px; }
.view + .zoomsign { margin-left: 6px; }
.slider { margin: 0 3px 0 4px; width: 100px; height: 1px; background: #d0d0d0; position: relative; }
.slider i { position: absolute; left: 48px; top: -5px; width: 4px; height: 11px; background: #d0d0d0; }
.pct { margin-left: 12px; font-size: 11px; }

/* taskbar */
.taskbar {
  height: 47px; flex: none; display: flex; align-items: center; padding-left: 450px;
  background: linear-gradient(90deg, #222d35 0, #1c2b42 22%, #142757 42%, #122556 62%, #14224a 85%, #171f3c 100%);
}
.tsearch {
  margin-left: 13px; width: 218px; height: 32px; box-sizing: border-box;
  background: #27407a; border-radius: 16px;
  display: flex; align-items: center; gap: 10px; padding-left: 10px;
  color: #dce4f2; font-size: 13px;
}
.apps { display: flex; align-items: center; margin-left: 2px; width: 219px; height: 100%; }
.app-ic { position: relative; width: 44px; height: 40px; display: flex; align-items: center; justify-content: center; flex: none; }
.app-ic.running::after { content: ""; position: absolute; left: 19px; bottom: 2px; width: 6px; height: 3px; border-radius: 2px; background: #9aa0aa; }
.app-ic.current { background: #1f3563; border-radius: 5px; width: 40px; margin-left: 2px; }
.app-ic.current::after { left: 12px; width: 16px; background: #59c6f5; }
.blank i { position: absolute; left: 17px; top: 8px; width: 18px; height: 16px; background: #f2f2f2; }
.blank b { position: absolute; left: 11px; top: 14px; width: 18px; height: 16px; background: rgba(105, 105, 105, .92); }
.badge {
  position: absolute; right: 2px; top: 0; width: 15px; height: 15px; border-radius: 50%;
  background: #5a64b8; color: #fff; font-size: 9px; display: flex; align-items: center; justify-content: center;
}
.tray { margin-left: 206px; flex: 1; display: flex; align-items: center; color: #fff; }
.mic { margin-left: 21px; }
.lang { margin-left: 28px; font-size: 13px; }
.wifi { margin-left: 25px; }
.vol { margin-left: 8px; }
.clock { margin-left: 21px; display: flex; flex-direction: column; align-items: flex-end; font-size: 12px; line-height: 16px; width: 55px; }

/* watermark */
.watermark {
  position: absolute; left: 598px; top: 676px; width: 172px; text-align: center;
  color: rgba(150, 150, 150, .65); pointer-events: none;
  font-family: "DejaVu Sans", sans-serif;
}
.watermark b { display: block; font-size: 45px; line-height: 50px; }
.watermark span { display: block; font-size: 23px; line-height: 24px; font-weight: bold; text-align: left; margin-left: 2px; margin-top: 4px; }
</style>
